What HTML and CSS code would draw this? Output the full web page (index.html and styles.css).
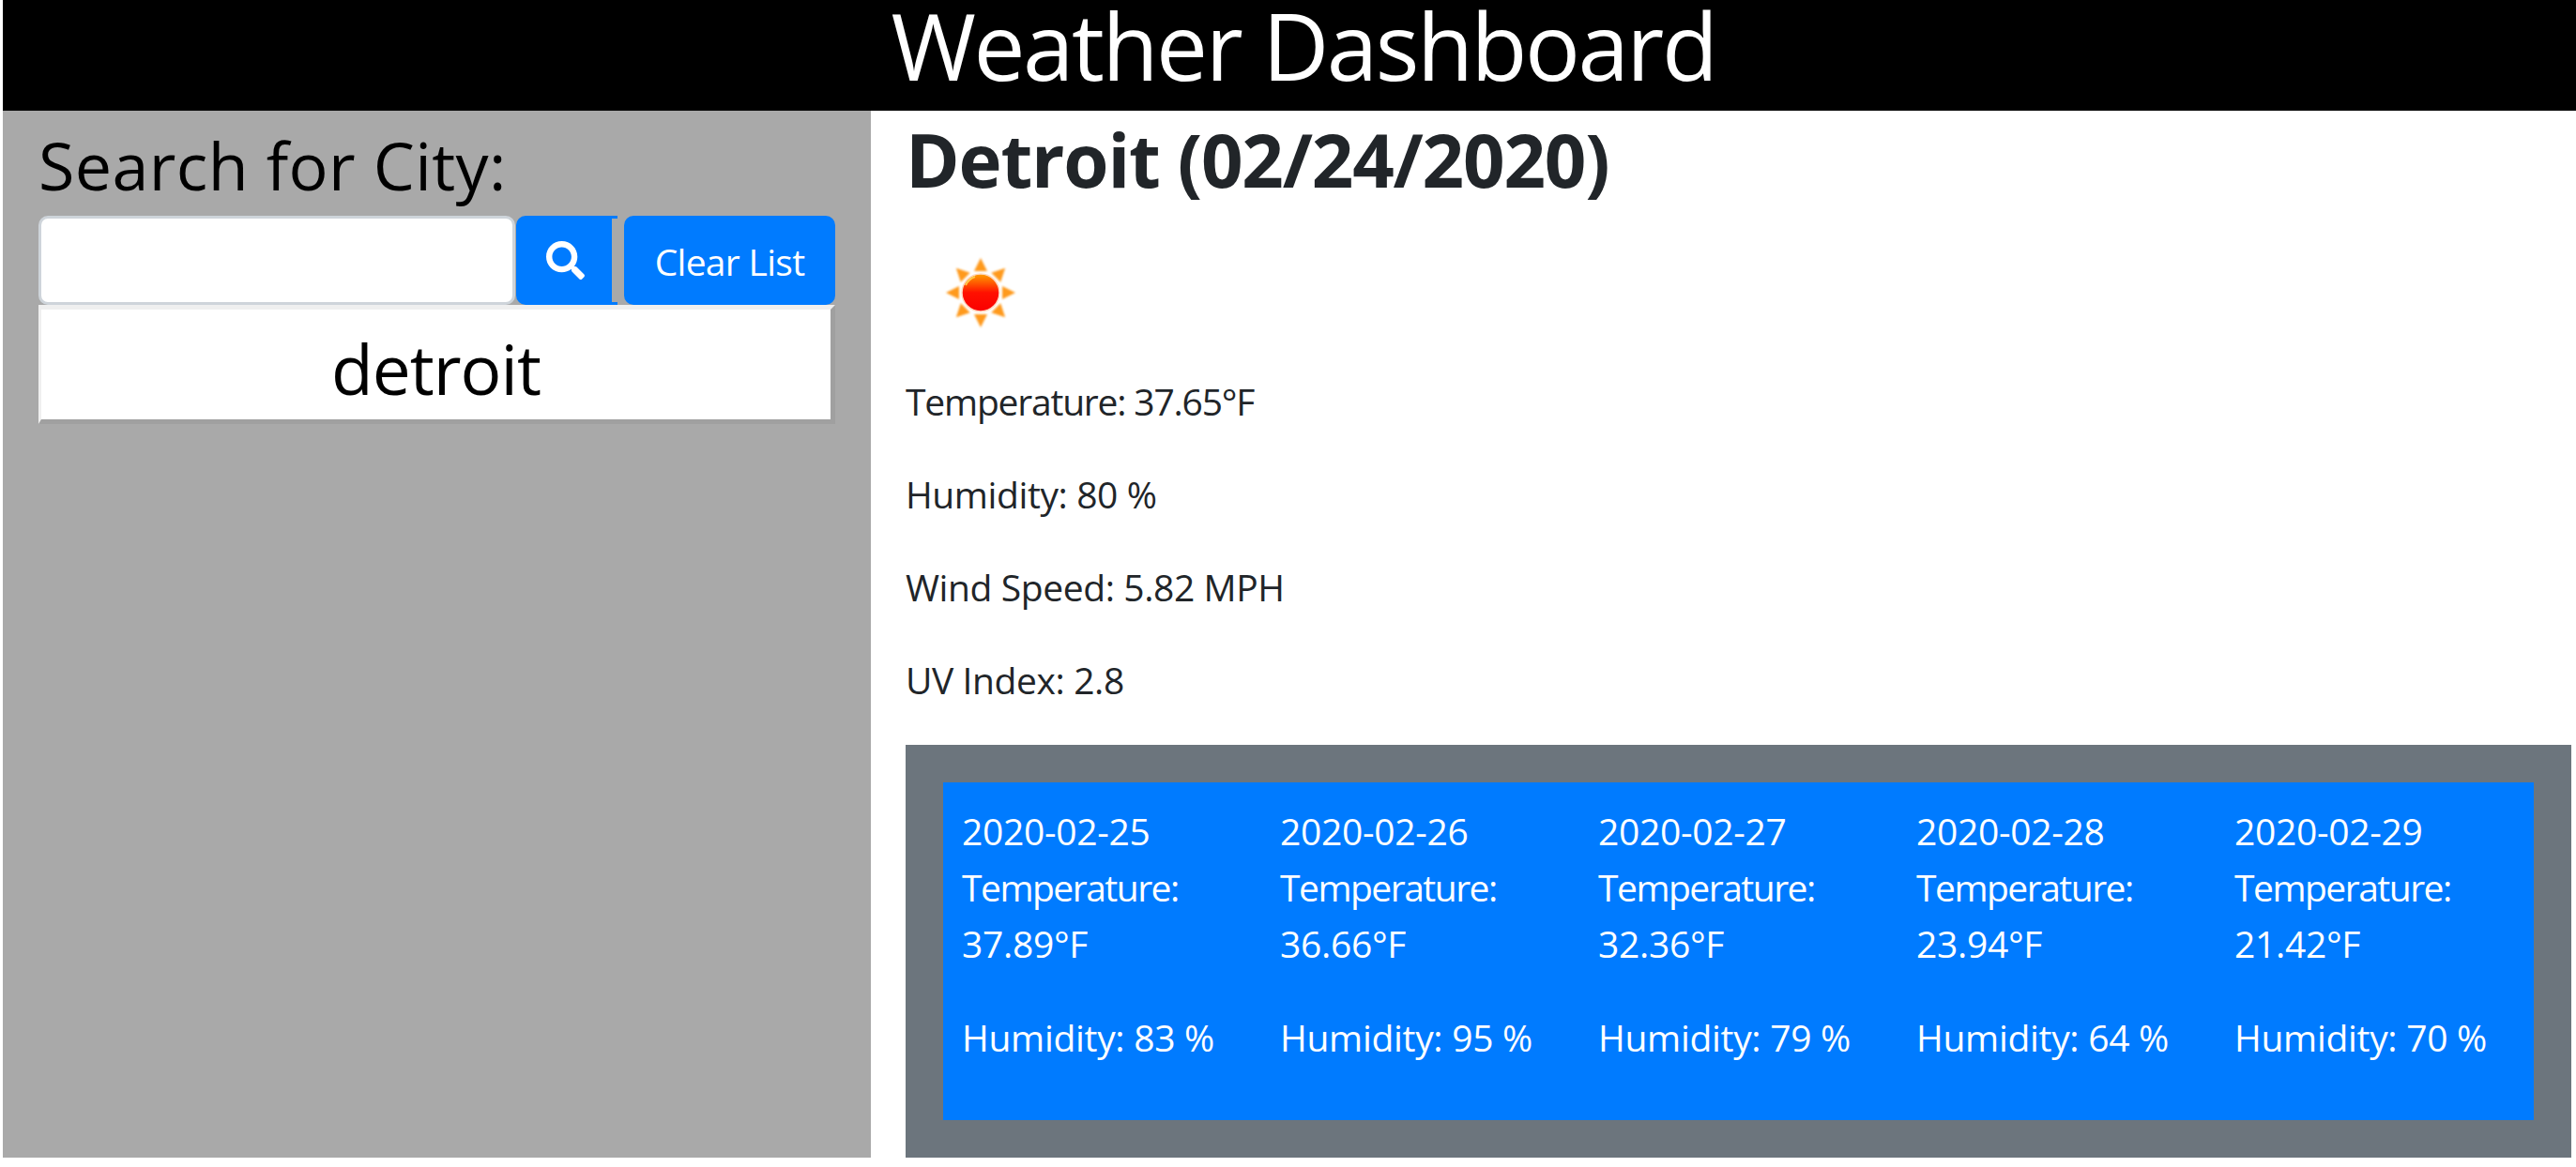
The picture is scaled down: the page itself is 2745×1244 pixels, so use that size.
FILE: index.html
```html
<!DOCTYPE html>
<html lang="en">
<head>
<meta charset="UTF-8">
<title>Weather Dashboard</title>
<link rel="stylesheet" href="styles.css">
</head>
<body>
<header class="top-bar">
  <h1>Weather Dashboard</h1>
</header>
<div class="page-row">
  <aside class="sidebar">
    <h3 class="search-title">Search for City:</h3>
    <div class="search-row">
      <input class="search-input" type="text">
      <button class="btn btn-search">
        <svg class="search-icon" viewBox="0 0 512 512"><path fill="#fff" d="M505 442.7L405.3 343c-4.5-4.5-10.6-7-17-7H372c27.6-35.3 44-79.7 44-128C416 93.1 322.9 0 208 0S0 93.1 0 208s93.1 208 208 208c48.3 0 92.7-16.4 128-44v16.3c0 6.4 2.5 12.5 7 17l99.7 99.7c9.4 9.4 24.6 9.4 33.9 0l28.3-28.3c9.4-9.4 9.4-24.6.1-34zM208 336c-70.7 0-128-57.2-128-128 0-70.7 57.2-128 128-128 70.7 0 128 57.2 128 128 0 70.7-57.2 128-128 128z"/></svg>
      </button>
      <button class="btn btn-clear">Clear List</button>
    </div>
    <div class="city-item">detroit</div>
  </aside>
  <main class="content">
    <h2 class="city-title">Detroit (02/24/2020)</h2>
    <div class="weather-icon">
      <svg width="90" height="90" viewBox="-45 -45 90 90">
        <defs>
          <linearGradient id="sun-fill" x1="0" y1="0" x2="0" y2="1">
            <stop offset="0" stop-color="#ffa000"/>
            <stop offset="0.5" stop-color="#ff1000"/>
            <stop offset="1" stop-color="#fa0000"/>
          </linearGradient>
          <filter id="soft"><feGaussianBlur stdDeviation="1"/></filter>
        </defs>
        <g fill="#ff9a1f" filter="url(#soft)">
          <path d="M0 -37L7 -23H-7Z"/>
          <path d="M0 -37L7 -23H-7Z" transform="rotate(45)"/>
          <path d="M0 -37L7 -23H-7Z" transform="rotate(90)"/>
          <path d="M0 -37L7 -23H-7Z" transform="rotate(135)"/>
          <path d="M0 -37L7 -23H-7Z" transform="rotate(180)"/>
          <path d="M0 -37L7 -23H-7Z" transform="rotate(225)"/>
          <path d="M0 -37L7 -23H-7Z" transform="rotate(270)"/>
          <path d="M0 -37L7 -23H-7Z" transform="rotate(315)"/>
        </g>
        <circle r="20" fill="url(#sun-fill)" stroke="#ffd9c0" stroke-width="1.5"/>
        <path d="M-16 -8A17 17 0 0 1 -6 -17" fill="none" stroke="#ffc94a" stroke-width="2"/>
      </svg>
    </div>
    <p class="stat stat-temp">Temperature: 37.65°F</p>
    <p class="stat">Humidity: 80 %</p>
    <p class="stat">Wind Speed: 5.82 MPH</p>
    <p class="stat">UV Index: 2.8</p>
    <section class="forecast">
      <div class="forecast-inner">
        <div class="day">
          <div>2020-02-25</div>
          <div class="temp-label">Temperature:</div>
          <p>37.89°F</p>
          <p>Humidity: 83 %</p>
        </div>
        <div class="day">
          <div>2020-02-26</div>
          <div class="temp-label">Temperature:</div>
          <p>36.66°F</p>
          <p>Humidity: 95 %</p>
        </div>
        <div class="day">
          <div>2020-02-27</div>
          <div class="temp-label">Temperature:</div>
          <p>32.36°F</p>
          <p>Humidity: 79 %</p>
        </div>
        <div class="day">
          <div>2020-02-28</div>
          <div class="temp-label">Temperature:</div>
          <p>23.94°F</p>
          <p>Humidity: 64 %</p>
        </div>
        <div class="day">
          <div>2020-02-29</div>
          <div class="temp-label">Temperature:</div>
          <p>21.42°F</p>
          <p>Humidity: 70 %</p>
        </div>
      </div>
    </section>
  </main>
</div>
</body>
</html>
```

FILE: styles.css
```css
body {
  margin: 0;
  background-color: #fff;
  font-family: "Open Sans", "Noto Sans", sans-serif;
  color: #212529;
  overflow: hidden;
}
.top-bar {
  margin-left: 3px;
  padding-left: 30px;
  height: 118px;
  background-color: #000;
  color: #fff;
  text-align: center;
}
.top-bar h1 {
  margin: 0;
  font-size: 98px;
  font-weight: 400;
  line-height: 96px;
  letter-spacing: -2.5px;
}
.page-row {
  display: flex;
  height: 1116px;
  margin-left: 3px;
  margin-right: 5px;
}
.sidebar {
  width: 925px;
  padding: 0 38px;
  box-sizing: border-box;
  background-color: #a9a9a9;
}
.search-title {
  margin: 0;
  height: 112px;
  font-size: 70px;
  font-weight: 400;
  line-height: 116px;
  letter-spacing: 0.4px;
  color: #000;
}
.search-row {
  display: flex;
  height: 95px;
}
.search-input {
  width: 508px;
  height: 95px;
  box-sizing: border-box;
  margin: 0 1px 0 0;
  border: 3px solid #ced4da;
  border-radius: 10px;
  background-color: #fff;
}
.btn {
  height: 95px;
  border: none;
  padding: 0;
  background-color: #007bff;
  color: #fff;
  font-family: inherit;
  font-size: 39px;
  letter-spacing: -0.7px;
}
.btn-search {
  position: relative;
  display: flex;
  justify-content: center;
  align-items: center;
  width: 108px;
  margin-right: 7px;
  padding-right: 3px;
  border-radius: 10px 0 0 10px;
}
.btn-search::after {
  content: "";
  position: absolute;
  top: 3px;
  bottom: 3px;
  right: 0;
  width: 6px;
  background-color: #a9a9a9;
}
.search-icon {
  width: 41px;
  height: 41px;
}
.btn-clear {
  width: 225px;
  padding-top: 2px;
  border-radius: 10px;
}
.city-item {
  width: 849px;
  height: 127px;
  box-sizing: border-box;
  padding-top: 11px;
  border-style: solid;
  border-width: 5px 5px 5px 3px;
  border-color: #efefef #a0a0a0 #a0a0a0 #efefef;
  background-color: #fff;
  color: #000;
  text-align: center;
  font-size: 73px;
  line-height: 104px;
  letter-spacing: -1px;
}
.content {
  flex: 1;
  margin-left: 37px;
}
.city-title {
  margin: 0;
  height: 104px;
  font-size: 78px;
  font-weight: 700;
  line-height: 104px;
  letter-spacing: -1.2px;
}
.weather-icon {
  height: 176px;
  box-sizing: border-box;
  padding: 3px 0 0 35px;
  display: flex;
  align-items: center;
}
.stat {
  margin: 0 0 39px;
  font-size: 39px;
  line-height: 60px;
  letter-spacing: -0.4px;
}
.stat-temp {
  letter-spacing: -1.2px;
}
.forecast {
  height: 440px;
  box-sizing: border-box;
  padding: 40px;
  background-color: #6c757d;
}
.forecast-inner {
  display: grid;
  grid-template-columns: repeat(5, 1fr);
  height: 360px;
  box-sizing: border-box;
  padding-top: 22px;
  background-color: #007bff;
  color: #fff;
  font-size: 39px;
  line-height: 60px;
  letter-spacing: -0.3px;
}
.day {
  padding-left: 20px;
}
.temp-label {
  letter-spacing: -1.5px;
}
.day p {
  margin: 0 0 40px;
}
```
